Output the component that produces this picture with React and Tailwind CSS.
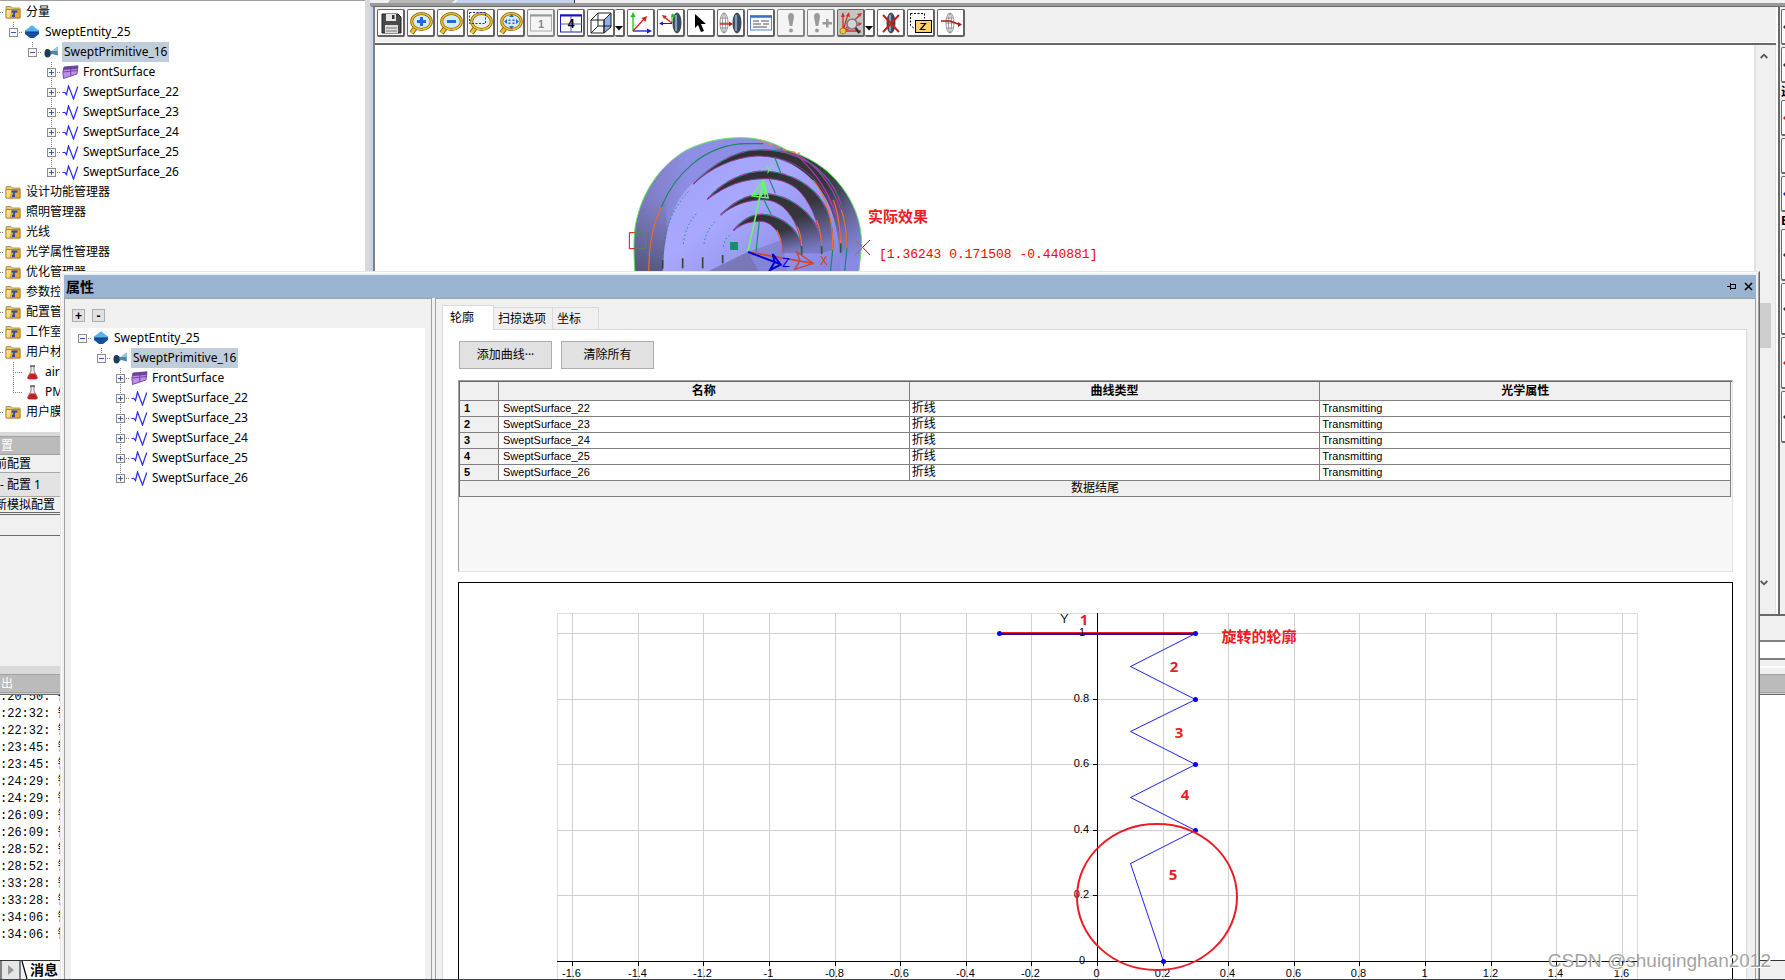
import { useState } from 'react';

const CJK = "font-['Noto_Sans','Noto_Sans_CJK_SC',sans-serif]";
const ARIAL = "font-['Liberation_Sans','Noto_Sans_CJK_SC',sans-serif]";

/* ---------- tree ---------- */

const FolderIcon = () => (
  <svg width="16" height="14" viewBox="0 0 16 14">
    <path d="M1 3V1.500h5L7.500 3H15v10H1z" fill="#e2c878" stroke="#a98b3c" strokeWidth=".8" />
    <path d="M1 4.500h14V13H1z" fill="#e9a92a" stroke="#a87a1c" strokeWidth=".8" />
    <path d="M1.500 5h5l-2 7.500h-3z" fill="#f8dc8c" />
    <path d="M6.500 6.500h6M9.500 6.500 8.500 11M7 11h3" stroke="#1c4fc0" strokeWidth="1.800" fill="none" />
  </svg>
);

const EntityIcon = () => (
  <svg width="14" height="14" viewBox="0 0 14 14">
    <path d="M7 .5 14 6.500 7 13 0 6.500z" fill="#1b58b0" />
    <path d="M0 5.500h14v3.500l-5 4H5L0 9z" fill="#174f9f" />
    <path d="M7 .5 14 5.500 13 7H1L0 5.500z" fill="#56b4ec" />
    <path d="M1 7h12" stroke="#123a78" strokeWidth="1" />
  </svg>
);

const PrimitiveIcon = () => (
  <svg width="15" height="14" viewBox="0 0 15 14">
    <path d="M2 4.500 8 6l5.500-4.500.5 9L8 9l-3.500 3z" fill="#4d87ab" />
    <path d="M8 6l5.500-4.500.3 4.500z" fill="#9cc6de" />
    <ellipse cx="3.500" cy="8.200" rx="3" ry="4.300" fill="#1f3d54" />
  </svg>
);

const FrontIcon = () => (
  <svg width="17" height="15" viewBox="0 0 17 15">
    <path d="M2 2 16 .8 15 9 1.500 13.500Q0 7 2 2z" fill="#c08cf0" stroke="#5d3b86" strokeWidth=".8" />
    <path d="M2 2 16 .8 15.600 4 1.200 5z" fill="#6a4793" />
    <path d="M9.500 1.500Q8 6 9 11M1 7l14.500-1.500" stroke="#5d3b86" strokeWidth=".8" fill="none" />
  </svg>
);

const PolylineIcon = () => (
  <svg width="17" height="15" viewBox="0 0 17 15">
    <path d="M.5 7.500h2.500l1.500 2L6.500 1l5 13L15.800 1.500" fill="none" stroke="#2a2af0" strokeWidth="1.200" />
  </svg>
);

const FlaskIcon = () => (
  <svg width="13" height="15" viewBox="0 0 13 15">
    <path d="M5 1v5L1.500 12.500Q1.500 14 3 14h7q1.500 0 1.500-1.500L8 6V1" fill="#eee" stroke="#777" strokeWidth=".9" />
    <path d="M4 8.500h5l2.300 4Q11.300 14 10 14H3Q1.700 14 1.700 12.500z" fill="#c81e1e" />
    <path d="M4 1h5" stroke="#444" strokeWidth="1.300" />
  </svg>
);

const ICONS = {
  folder: FolderIcon,
  entity: EntityIcon,
  primitive: PrimitiveIcon,
  front: FrontIcon,
  polyline: PolylineIcon,
  flask: FlaskIcon,
};

const sweptNodes = [
  { depth: 1, icon: 'entity', label: 'SweptEntity_25', box: '-', last: true },
  { depth: 2, icon: 'primitive', label: 'SweptPrimitive_16', box: '-', last: true, selected: true },
  { depth: 3, icon: 'front', label: 'FrontSurface', box: '+' },
  { depth: 3, icon: 'polyline', label: 'SweptSurface_22', box: '+' },
  { depth: 3, icon: 'polyline', label: 'SweptSurface_23', box: '+' },
  { depth: 3, icon: 'polyline', label: 'SweptSurface_24', box: '+' },
  { depth: 3, icon: 'polyline', label: 'SweptSurface_25', box: '+' },
  { depth: 3, icon: 'polyline', label: 'SweptSurface_26', box: '+', last: true },
];

const systemNodes = [
  { depth: 0, icon: 'folder', label: '分量' },
  ...sweptNodes,
  { depth: 0, icon: 'folder', label: '设计功能管理器' },
  { depth: 0, icon: 'folder', label: '照明管理器' },
  { depth: 0, icon: 'folder', label: '光线' },
  { depth: 0, icon: 'folder', label: '光学属性管理器' },
  { depth: 0, icon: 'folder', label: '优化管理器' },
  { depth: 0, icon: 'folder', label: '参数控制' },
  { depth: 0, icon: 'folder', label: '配置管理器' },
  { depth: 0, icon: 'folder', label: '工作室' },
  { depth: 0, icon: 'folder', label: '用户材料' },
  { depth: 1, icon: 'flask', label: 'air' },
  { depth: 1, icon: 'flask', label: 'PMMA', last: true },
  { depth: 0, icon: 'folder', label: '用户膜层' },
];

const Branch = ({ box, last, root }) => (
  <svg width="19" height="20" viewBox="0 0 19 20" className="shrink-0" shapeRendering="crispEdges">
    {!root && (
      <path d={last ? 'M9.500 0V10' : 'M9.500 0V20'} stroke="#808080" strokeDasharray="1 1" />
    )}
    <path d="M9 10.500H19" stroke="#808080" strokeDasharray="1 1" />
    {box && (
      <>
        <rect x="5.500" y="6.500" width="8" height="8" fill="#f8f8f8" stroke="#8c8c8c" />
        <path d={box === '+' ? 'M7 10.500h5M9.500 8v5' : 'M7 10.500h5'} stroke="#3b55a8" />
      </>
    )}
  </svg>
);

const TreeView = ({ nodes, indent }) => (
  <ul className={`text-xs text-black ${CJK}`}>
    {nodes.map((node, i) => {
      const Icon = ICONS[node.icon];
      return (
        <li
          key={i}
          className="flex h-5 items-center whitespace-nowrap"
          style={{ marginLeft: indent + (node.depth - 1) * 19 }}
        >
          <Branch box={node.box} last={node.last} root={i === 0 || node.depth === 0} />
          <span className="flex w-5 shrink-0 justify-center pr-[2px]">
            <Icon />
          </span>
          <span className={`h-5 px-[2px] leading-5 ${node.selected ? 'bg-[#bfcddb]' : ''}`}>
            {node.label}
          </span>
        </li>
      );
    })}
  </ul>
);

/* ---------- toolbar ---------- */

const Lens = ({ children, glass = '#d4ecf8' }) => (
  <>
    <path d="M7 16 2.500 22" stroke="#7d5c10" strokeWidth="5" />
    <path d="M7 16 2.500 22" stroke="#f2c22c" strokeWidth="3.200" />
    <ellipse cx="12.500" cy="10.500" rx="9.800" ry="8" fill={glass} stroke="#7d5c10" strokeWidth="3" />
    <ellipse cx="12.500" cy="10.500" rx="9.800" ry="8" fill="none" stroke="#f2c22c" strokeWidth="1.600" />
    {children}
  </>
);

const DarkLens = ({ cx = 18 }) => (
  <>
    <ellipse cx={cx} cy="12" rx="4" ry="10" fill="#41566e" stroke="#1e2b3a" strokeWidth=".8" />
    <path d={`M${cx - 1} 4v16`} stroke="#9fb4c8" strokeWidth="1.500" />
    <path d={`M${cx + 2} 5v14`} stroke="#2d4056" strokeWidth="1" />
  </>
);

const WireLens = ({ cx = 5 }) => (
  <g fill="none" stroke="#888" strokeWidth=".9">
    <ellipse cx={cx} cy="12" rx="4" ry="10" />
    <ellipse cx={cx} cy="12" rx="1.500" ry="10" />
    <path d={`M${cx - 3} 7h6M${cx - 4} 12h8M${cx - 3} 17h6`} />
  </g>
);

const toolIcons = {
  save: (
    <>
      <path d="M3 3h16l3 3v16H3z" fill="#4a4a4a" stroke="#222" />
      <path d="M7 3h10v7H7z" fill="#e8e8e8" />
      <path d="M13 4h2.500v4H13z" fill="#333" />
      <path d="M6 14h13v8H6z" fill="#ddd" />
      <path d="M7 17h11M7 20h11" stroke="#777" />
    </>
  ),
  zoomIn: (
    <Lens>
      <path d="M12.500 6v9M8 10.500h9" stroke="#2467d8" strokeWidth="3" />
    </Lens>
  ),
  zoomOut: (
    <Lens>
      <path d="M8 10.500h9" stroke="#2467d8" strokeWidth="3" />
    </Lens>
  ),
  zoomBox: (
    <Lens glass="#e6eef4">
      <path d="M.5 1.500h16v11H.5z" fill="none" stroke="#1b2fa8" strokeDasharray="2 1.500" />
    </Lens>
  ),
  zoomFit: (
    <Lens>
      <path
        d="M12.500 3l2.500 3h-5zM12.500 18l2.500-3h-5zM5 10.500l3-2.500v5zM20 10.500l-3-2.500v5zM9.500 8.500h2v1.500h-2zM13.500 8.500h2v1.500h-2zM9.500 11.500h2v1.500h-2zM13.500 11.500h2v1.500h-2z"
        fill="#2467d8"
      />
    </Lens>
  ),
  one: (
    <>
      <rect x="1.500" y="4" width="21" height="16" fill="#f4f4f4" stroke="#aaa" />
      <path d="M1 4.500h22" stroke="#999" strokeWidth="2" />
      <text x="12" y="17" textAnchor="middle" fontSize="11" fontWeight="700" fill="#888">1</text>
    </>
  ),
  four: (
    <>
      <rect x="1.500" y="4" width="21" height="17" fill="#fff" stroke="#1a1ab8" />
      <path d="M1 4.500h22" stroke="#1414c8" strokeWidth="2" />
      <path d="M1.500 13h21M12 5v16" stroke="#5a5ac8" />
      <text x="12" y="17" textAnchor="middle" fontSize="12" fontWeight="700" fill="#000">4</text>
    </>
  ),
  cube: (
    <>
      <path d="M15 9l7-7v14l-7 6z" fill="#8fb0e8" stroke="#222" />
      <path d="M2 9h13v13H2zM2 9l7-7h13M9 2v13h13M9 15l-7 7" fill="none" stroke="#222" />
    </>
  ),
  axes: (
    <>
      <path d="M4 20V4" stroke="#18c018" strokeWidth="1.300" />
      <path d="M4 1 1.500 6h5z" fill="#18c018" />
      <path d="M4 20h15" stroke="#1818e0" strokeWidth="1.300" />
      <path d="M23 20l-5-2.500v5z" fill="#1818e0" />
      <path d="M4 20 15 8" stroke="#d82020" strokeWidth="1.300" />
      <path d="M18 5l-1.500 6-4-4z" fill="#d82020" />
    </>
  ),
  axesLens: (
    <>
      <DarkLens cx={18} />
      <path d="M13 12V3" stroke="#18c018" />
      <path d="M14 2l-2 4h4z" fill="#18c018" />
      <path d="M13 12 5 6" stroke="#d82020" strokeWidth="1.300" />
      <path d="M3 4l5 1-3 3z" fill="#d82020" />
      <path d="M13 12.500H3" stroke="#1818e0" />
      <path d="M0 12.500l4-2v4z" fill="#1818e0" />
    </>
  ),
  pointer: <path d="M6 3l11 10h-5l3 7-3 1-3-7-3 3z" fill="#000" />,
  lensMove: (
    <>
      <WireLens cx={5} />
      <DarkLens cx={18} />
      <path d="M1 13h10" stroke="#c02020" strokeWidth="1.300" />
      <path d="M14 13l-4-2.500v5z" fill="#c02020" />
    </>
  ),
  card: (
    <>
      <rect x="1.500" y="5" width="21" height="14" fill="#f6f9fe" stroke="#5c86c8" />
      <path d="M1 5.500h22" stroke="#3f6fc0" strokeWidth="2.500" />
      <path d="M4 10h6M12 10h8M4 13h8M4 16h14M14 13h6" stroke="#555" />
    </>
  ),
  bang: (
    <g fill="#9b9b9b">
      <path d="M9 6q0-4 3-4t3 4l-1.700 9h-2.600z" />
      <circle cx="12" cy="19.500" r="2" />
    </g>
  ),
  bangPlus: (
    <g fill="#9b9b9b">
      <path d="M5 6q0-4 3-4t3 4l-1.700 9H6.700z" />
      <circle cx="8" cy="19.500" r="2" />
      <path d="M17 8h2.500v3H23v2.500h-3.500v3H17v-3h-3.500V11H17z" />
    </g>
  ),
  rays: (
    <>
      <path d="M4 20V4M4 20 9 3M4 20 22 3M4 20l18-7M4 20h18" stroke="#c83228" strokeWidth="1.300" />
      <path d="M4 1 2 6h4zM10 1 7 5l4 1zM23 2l-5 1 3 3zM23 12l-4-.5 1 3z" fill="#c83228" />
      <circle cx="4" cy="20" r="3" fill="#e8c840" stroke="#8a6a10" strokeWidth=".7" />
      <circle cx="13" cy="13" r="5" fill="#d4d4d4" stroke="#777" strokeWidth="1.500" />
      <path d="M16.500 17l4 5" stroke="#333" strokeWidth="2.500" />
    </>
  ),
  lensDelete: (
    <>
      <DarkLens cx={12} />
      <path d="M4 4l16 17M20 4 4 21" stroke="#c82018" strokeWidth="2" />
    </>
  ),
  zPlane: (
    <>
      <path d="M1.500 2.500h14v5M1.500 2.500v12l4 3" fill="none" stroke="#000" strokeDasharray="2 1.500" />
      <rect x="6.500" y="9.500" width="16" height="12" fill="#ffd070" stroke="#000" />
      <path d="M11.500 12.500h5l-5 6h5" fill="none" stroke="#000" strokeWidth="1.200" />
    </>
  ),
  lensRay: (
    <>
      <WireLens cx={11} />
      <path d="M2 10h9l8 3" fill="none" stroke="#b01818" strokeWidth="1.400" />
      <path d="M23 13.500l-4 2.500v-5z" fill="#b01818" />
    </>
  ),
};

const tools = [
  { id: 'save', title: '保存' },
  { id: 'zoomIn', title: '放大' },
  { id: 'zoomOut', title: '缩小' },
  { id: 'zoomBox', title: '窗口缩放' },
  { id: 'zoomFit', title: '全部显示' },
  { id: 'one', title: '单视图', disabled: true },
  { id: 'four', title: '四视图' },
  { id: 'cube', title: '视角', menu: true },
  { id: 'axes', title: '坐标轴' },
  { id: 'axesLens', title: '局部坐标' },
  { id: 'pointer', title: '选择' },
  { id: 'lensMove', title: '移动' },
  { id: 'card', title: '属性' },
  { id: 'bang', title: '追迹', disabled: true },
  { id: 'bangPlus', title: '追加追迹', disabled: true },
  { id: 'rays', title: '光线显示', menu: true, pressed: true },
  { id: 'lensDelete', title: '删除' },
  { id: 'zPlane', title: 'Z' },
  { id: 'lensRay', title: '光线' },
];

const ToolButton = ({ tool }) => {
  const face = tool.pressed ? 'bg-[#c4c4c4]' : tool.disabled ? 'bg-[#f4f4f4]' : 'bg-white';
  const edge = tool.disabled ? 'border-[#858585]' : 'border-[#636363]';
  return (
    <div className="flex">
      <button
        type="button"
        aria-label={tool.title}
        disabled={tool.disabled}
        className={`flex h-7 w-7 items-center justify-center rounded-[2px] border border-r-2 border-b-2 ${face} ${edge}`}
      >
        <svg width="24" height="24" viewBox="0 0 24 24" className={ARIAL}>
          {toolIcons[tool.id]}
        </svg>
      </button>
      {tool.menu && (
        <button
          type="button"
          aria-label={`${tool.title}菜单`}
          className="flex h-7 w-[10px] items-end justify-center rounded-[2px] border border-r-2 border-b-2 border-l-0 border-[#636363] bg-white pb-1"
        >
          <svg width="8" height="5" viewBox="0 0 8 5" className="shrink-0">
            <path d="M0 0h8L4 4.500z" fill="#000" />
          </svg>
        </button>
      )}
    </div>
  );
};

/* ---------- 3D view ---------- */

const rings = [
  {
    fill: 'url(#dark1)',
    outer: 'M280 192C330 140 400 92 470 90C540 86 620 108 672 165C720 215 742 290 741 385',
    inner: 'M722 395C724 310 700 250 650 185C600 130 540 108 470 108C400 112 330 145 280 192',
  },
  {
    fill: 'url(#dark2)',
    outer: 'M322 238C370 180 440 152 500 153C580 160 640 200 670 250C695 290 700 340 698 390',
    inner: 'M665 400C665 330 640 260 600 215C570 185 530 176 500 176C430 176 380 195 322 238',
  },
  {
    fill: 'url(#dark3)',
    outer: 'M362 285C400 245 440 222 500 221C570 228 620 270 645 310C660 340 665 370 665 400',
    inner: 'M605 400C605 340 585 295 550 262C530 245 510 240 490 239C440 240 400 255 362 285',
  },
  {
    fill: 'url(#dark4)',
    outer: 'M400 332C425 300 455 283 485 283C530 284 575 312 592 345C602 365 605 385 605 400',
    inner: 'M546 400C547 360 535 330 510 313C500 306 490 304 480 304C445 305 425 312 400 332',
  },
];

const Viewport3D = () => (
  <svg width="800" height="240" viewBox="375 45 800 240" className="block max-w-full shrink-0">
    <defs>
      <linearGradient id="body" x1="0" y1="0" x2="1" y2="0">
        <stop offset="0" stopColor="#7878b8" />
        <stop offset=".25" stopColor="#8e8ee6" />
        <stop offset=".6" stopColor="#8c8ce4" />
        <stop offset=".72" stopColor="#36363c" />
        <stop offset=".86" stopColor="#3e3e4a" />
        <stop offset="1" stopColor="#6c6ca4" />
      </linearGradient>
      <linearGradient id="shade" x1="0" y1="0" x2="0" y2="1">
        <stop offset="0" stopColor="#505070" stopOpacity="0" />
        <stop offset="1" stopColor="#464662" stopOpacity=".75" />
      </linearGradient>
      <linearGradient id="lower" x1="0" y1="0" x2="0" y2="1">
        <stop offset="0" stopColor="#8a8ae4" stopOpacity="0" />
        <stop offset="1" stopColor="#8a8ae4" />
      </linearGradient>
      <linearGradient id="face" x1="0" y1="0" x2="1" y2="1">
        <stop offset="0" stopColor="#a0a0f6" />
        <stop offset=".4" stopColor="#a8a8ff" />
        <stop offset="1" stopColor="#8080d8" />
      </linearGradient>
      {['1', '2', '3', '4'].map((n) => (
        <linearGradient key={n} id={`dark${n}`} x1=".3" y1="0" x2=".75" y2="1">
          <stop offset="0" stopColor="#303034" />
          <stop offset=".5" stopColor="#36363c" />
          <stop offset="1" stopColor="#7878c4" />
        </linearGradient>
      ))}
      <clipPath id="solid">
        <path d="M108 500C100 400 98 340 112 290C135 200 190 130 260 90C320 60 380 52 430 53C480 54 520 68 560 90C620 108 680 140 725 200C770 260 785 320 785 375L772 500Z" />
      </clipPath>
    </defs>
    <g transform="translate(600 120) scale(.33333)" fill="none" strokeWidth="3.500">
      <g clipPath="url(#solid)">
        <rect x="90" y="40" width="710" height="460" fill="url(#body)" />
        <rect x="560" y="220" width="240" height="200" fill="url(#lower)" />
        <rect x="560" y="419" width="240" height="90" fill="#8a8ae4" />
        <rect x="90" y="230" width="110" height="240" fill="url(#shade)" />
        <path
          d="M188 500C186 400 200 300 240 235C290 160 380 108 470 108C560 108 640 160 680 240C712 300 725 400 720 500Z"
          fill="url(#face)"
        />
        <path d="M445 395L230 500H500z" fill="#5e5e88" opacity=".55" />
        <path d="M445 395L546 360L570 500H500z" fill="#7a7ac8" opacity=".6" />
      </g>
      {rings.map((ring, i) => (
        <g key={i}>
          <path d={`${ring.outer} L${ring.inner.slice(1)}`} fill={ring.fill} />
          <path d={ring.outer} stroke="#159068" />
          <path d={ring.outer} stroke="#a43aa8" strokeDasharray="26 14" />
          <path d={ring.inner} stroke="#8a3a90" strokeWidth="3" />
        </g>
      ))}
      <path d="M146 500C145 400 150 330 184 262" stroke="#ec6c28" />
      <path d="M184 262C220 170 310 72 440 71H490" stroke="#16885c" />
      <path d="M552 90C640 110 700 200 722 270" stroke="#b03cb4" />
      <path d="M585 100C640 150 700 220 722 340" stroke="#b03cb4" />
      <path
        d="M640 180C680 230 700 300 698 390M700 240C716 280 722 330 722 395M724 270C736 305 741 340 741 385M592 320C602 340 606 370 605 400M650 300C662 330 665 370 665 400M530 330C542 350 546 370 546 400"
        stroke="#f0722c"
      />
      <path d="M698 390L690 470M741 385L732 470" stroke="#108a62" />
      <path d="M722 370V398M665 378V402M605 378V405" stroke="#2f5a40" strokeWidth="5" />
      <path d="M188 446V420M248 445V415M308 445V412M368 430V405" stroke="#3a4430" strokeWidth="5" />
      <path d="M188 415C190 330 215 270 265 215M250 372C255 330 268 305 290 280M312 372C316 345 325 325 350 300M370 380C374 360 380 350 392 345" stroke="#188a70" strokeWidth="3" strokeDasharray="4 8" />
      <path
        d="M108 500C100 400 98 340 112 290C135 200 190 130 260 90C320 60 380 52 430 53C480 54 520 68 560 90C620 108 680 140 725 200C770 260 785 320 785 375L772 500"
        stroke="#62e862"
        strokeWidth="3"
      />
      <path d="M480 62L560 92L600 100" stroke="#f08048" strokeDasharray="16 8" />
      <path d="M524 112L542 158M508 178L526 220M492 240L514 284M478 304L468 395" stroke="#0f9468" />
      <rect x="390" y="366" width="24" height="24" fill="#0f9468" />
      <g stroke="#66f866" strokeWidth="5">
        <path d="M444 394L490 182" />
        <path d="M490 180L456 228L505 234L490 180L484 228M490 180L496 234M462 224L500 220" strokeWidth="4" />
        <path d="M498 136L507 150L518 136M507 150L503 160" strokeWidth="3" />
      </g>
      <g stroke="#d04428" strokeWidth="5">
        <path d="M444 396L640 430" />
        <path d="M640 430L590 396L600 422L584 448L640 430" strokeWidth="4" />
      </g>
      <g stroke="#0000d8" strokeWidth="6">
        <path d="M444 396L540 432" />
        <path d="M542 434L518 402L524 426L510 450z" />
      </g>
      <path d="M137 338V386H104M104 338H137" stroke="#5a8a50" strokeWidth="3" />
      <path d="M104 338H88V386H104" stroke="#f00000" strokeWidth="3" />
      <path d="M810 360L788 382L810 405" stroke="#f00000" strokeWidth="3" />
      <path d="M764 358L788 382L764 406" stroke="#7a8a30" strokeWidth="3" />
    </g>
    <g className="font-['Liberation_Mono',monospace]" fontSize="13">
      <text x="782" y="267" fill="#0000d8">Z</text>
      <text x="820" y="265" fill="#d04428">X</text>
      <text x="879" y="258" fill="#ff0000">[1.36243 0.171508 -0.440881]</text>
    </g>
    <text x="868" y="222" fill="#ed1c24" fontSize="15" fontWeight="700" className={CJK}>
      实际效果
    </text>
  </svg>
);

/* ---------- profile chart ---------- */

const PX = 328; // pixels per unit on both axes
const ORIGIN = { x: 1096, y: 961 };
const toX = (v) => Math.round(ORIGIN.x + v * PX) + 0.5;
const toY = (v) => Math.round(ORIGIN.y - v * PX) + 0.5;

const xTicks = Array.from({ length: 17 }, (_, i) => (i - 8) / 5);
const yTicks = [0, 0.2, 0.4, 0.6, 0.8, 1];

const profile = [
  [-0.3, 1],
  [0.3, 1],
  [0.1, 0.9],
  [0.3, 0.8],
  [0.1, 0.7],
  [0.3, 0.6],
  [0.1, 0.5],
  [0.3, 0.4],
  [0.1, 0.3],
  [0.2, 0],
];
const endpoints = [profile[0], profile[1], profile[3], profile[5], profile[7], profile[9]];

const notes = [
  { text: '1', x: 1083, y: 625 },
  { text: '2', x: 1173, y: 672 },
  { text: '3', x: 1178, y: 738 },
  { text: '4', x: 1184, y: 800 },
  { text: '5', x: 1172, y: 880 },
];

const ProfileChart = () => (
  <svg
    width="1080"
    height="396"
    viewBox="555 583 1080 396"
    className={`block shrink-0 overflow-visible ${ARIAL}`}
    fontSize="11"
  >
    <g stroke="#d0d0d0" shapeRendering="crispEdges">
      <path d="M556.500 980V613.500H1636.500V980" fill="none" stroke="#dcdcdc" />
      {xTicks.map((t) => (
        <path key={t} d={`M${toX(t)} 613V980`} />
      ))}
      {yTicks.map((t) => (
        <path key={t} d={`M556 ${toY(t)}H1636`} />
      ))}
    </g>
    <g stroke="#000" shapeRendering="crispEdges">
      <path d="M556 961.500H1637M1096.500 613V965" />
      {xTicks.map((t) => (
        <path key={t} d={`M${toX(t)} 961V966`} />
      ))}
      {yTicks.map((t) => (
        <path key={t} d={`M1092 ${toY(t)}H1097`} />
      ))}
    </g>
    {xTicks.map((t) => (
      <text key={t} x={toX(t) - 1} y="977" textAnchor="middle">{t}</text>
    ))}
    <path d={`M${toX(-0.3)} 633.500H${toX(0.3)}`} stroke="#ed1c24" strokeWidth="3" />
    <path d={`M${toX(-0.3)} 634H${toX(0.3)}`} stroke="#2a0a9c" strokeWidth="2" />
    {yTicks.map((t) => (
      <text key={t} x={t % 1 ? 1088 : 1084} y={toY(t) + 2} textAnchor="end">{t}</text>
    ))}
    <text x="1059" y="623" fontSize="13" fill="#222">Y</text>
    <polyline
      points={profile.slice(1).map(([x, y]) => `${toX(x)},${toY(y)}`).join(' ')}
      fill="none"
      stroke="#2020ff"
      strokeWidth="1"
    />
    {endpoints.map(([x, y]) => (
      <circle key={`${x}${y}`} cx={toX(x)} cy={toY(y)} r="2.500" fill="#0000ff" />
    ))}
    <ellipse cx="1156" cy="897" rx="80" ry="73" fill="none" stroke="#ed1c24" strokeWidth="2" />
    <g fill="#ed1c24" fontWeight="700" fontSize="15" className={CJK} textAnchor="middle">
      {notes.map((n) => (
        <text key={n.text} x={n.x} y={n.y}>{n.text}</text>
      ))}
      <text x="1258" y="642">旋转的轮廓</text>
    </g>
  </svg>
);

/* ---------- properties window ---------- */

const curves = ['SweptSurface_22', 'SweptSurface_23', 'SweptSurface_24', 'SweptSurface_25', 'SweptSurface_26'];
const tabs = [
  { label: '轮廓', width: 'w-[52px]' },
  { label: '扫掠选项', width: 'w-[59px]' },
  { label: '坐标', width: 'w-[46px]' },
];

const CurveTable = () => (
  <div className="mt-[11px] h-48 shrink-0 border border-[#a0a0a0] border-r-[#e3e3e3] border-b-[#e3e3e3] bg-[#f7f7f7]">
    <div className="border-t border-l border-[#696969] pr-px">
      <table className={`w-full table-fixed border-separate border-spacing-0 text-[11px] leading-[15px] text-black ${ARIAL}`}>
        <colgroup>
          <col className="w-[39px]" />
          <col />
          <col />
          <col />
        </colgroup>
        <thead>
          <tr className="h-[19px] bg-[#f0f0f0] text-xs">
            <th className="border-r border-b border-[#808080]" />
            {['名称', '曲线类型', '光学属性'].map((h) => (
              <th key={h} scope="col" className="border-r border-b border-[#808080] p-0 leading-[18px] font-bold">{h}</th>
            ))}
          </tr>
        </thead>
        <tbody>
          {curves.map((name, i) => (
            <tr key={name} className="h-4 bg-white">
              <th scope="row" className="border-r border-b border-[#808080] bg-[#f0f0f0] py-0 pr-0 pl-1 text-left font-bold">{i + 1}</th>
              <td className="border-r border-b border-[#808080] py-0 pr-0 pl-1">{name}</td>
              <td className="border-r border-b border-[#808080] py-0 pr-0 pl-[2px] text-xs leading-[15px]">折线</td>
              <td className="border-r border-b border-[#808080] py-0 pr-0 pl-[2px]">Transmitting</td>
            </tr>
          ))}
          <tr className="h-4 bg-[#f0f0f0]">
            <td colSpan="4" className="border-r border-b border-[#808080] p-0 text-center text-xs leading-[15px]">数据结尾</td>
          </tr>
        </tbody>
      </table>
    </div>
  </div>
);

const PropertiesWindow = () => {
  const [tab, setTab] = useState('轮廓');

  return (
    <section className="absolute top-[271px] right-[25px] bottom-px left-[60px] flex border-t border-r border-l border-[#e6e6e6] border-r-[#696969] bg-[#f0f0f0]">
      <div className="flex min-w-0 flex-1 flex-col border-t border-r border-l border-white border-r-[#a0a0a0] px-[2px] pt-[2px]">
        <header className={`flex h-[23px] shrink-0 items-center justify-between bg-[#99b3d1] pr-[3px] pl-[2px] text-black ${CJK}`}>
          <h2 className="text-sm leading-5 font-bold">属性</h2>
          <div className="flex gap-2">
            <button type="button" aria-label="固定">
              <svg width="9" height="9" viewBox="0 0 9 9" shapeRendering="crispEdges">
                <path d="M0 4.500h3M3.500 1v7M3 2.500h5.500v4M3 6.500h5" fill="none" stroke="#000" />
              </svg>
            </button>
            <button type="button" aria-label="关闭">
              <svg width="9" height="9" viewBox="0 0 9 9">
                <path d="M1 1l7 7M8 1 1 8" stroke="#000" strokeWidth="1.600" />
              </svg>
            </button>
          </div>
        </header>

        <div className="flex min-h-0 flex-1 gap-[3px]">
          <div className="flex w-[368px] shrink-0 flex-col border-t border-r border-l border-[#a0a0a0] px-[6px] pt-[10px]">
            <div className="flex gap-[7px] pl-px">
              {['+', '-'].map((s) => (
                <button
                  key={s}
                  type="button"
                  className={`flex h-[13px] w-[13px] items-center justify-center border border-[#adadad] bg-[#e1e1e1] text-xs leading-3 font-bold text-black ${ARIAL}`}
                >
                  {s}
                </button>
              ))}
            </div>
            <div className="mt-[6px] flex-1 bg-white">
              <TreeView nodes={sweptNodes} indent={2} />
            </div>
          </div>

          <div className="flex min-w-0 flex-1 flex-col border-t border-r border-l border-[#a0a0a0] pt-[6px] pr-2 pl-[6px]">
            <div role="tablist" className={`flex h-6 shrink-0 items-end text-xs text-black ${CJK}`}>
              {tabs.map((t) => (
                <button
                  key={t.label}
                  type="button"
                  role="tab"
                  aria-selected={tab === t.label}
                  onClick={() => setTab(t.label)}
                  className={
                    tab === t.label
                      ? `relative -mb-px h-[25px] border-t border-r border-l border-[#d9d9d9] bg-white pb-px pl-[7px] text-left whitespace-nowrap ${t.width}`
                      : `h-[22px] border-t border-r border-[#d9d9d9] bg-[#f0f0f0] pl-1 text-left whitespace-nowrap ${t.width}`
                  }
                >
                  {t.label}
                </button>
              ))}
            </div>
            <div role="tabpanel" className="flex min-h-0 flex-1 flex-col border-t border-r border-l border-[#d9d9d9] bg-white pt-[11px] pr-[13px] pl-[15px]">
              <div className={`flex shrink-0 gap-[9px] pl-px text-xs text-black ${CJK}`}>
                <button type="button" className="h-7 w-[93px] border border-[#adadad] bg-[#e1e1e1]">添加曲线···</button>
                <button type="button" className="h-7 w-[93px] border border-[#adadad] bg-[#e1e1e1]">清除所有</button>
              </div>
              <CurveTable />
              <div className="mt-[10px] flex min-h-0 flex-1 justify-center overflow-hidden border-t border-r border-l border-black">
                <ProfileChart />
              </div>
            </div>
          </div>
        </div>
      </div>
    </section>
  );
};

/* ---------- main frame ---------- */

const Chevron = ({ down }) => (
  <svg width="8" height="6" viewBox="0 0 8 6">
    <path d={down ? 'M.7 1 4 4.300 7.300 1' : 'M.7 5 4 1.700 7.300 5'} fill="none" stroke="#555" strokeWidth="1.800" />
  </svg>
);

const StripButton = ({ tall, mark = '#333' }) => (
  <button
    type="button"
    aria-label="工具"
    className={`w-9 shrink-0 rounded-[2px] border border-b-2 border-[#696969] bg-[#fafafa] ${tall ? 'h-[52px]' : 'h-9'}`}
  >
    <svg width="3" height="8" viewBox="0 0 3 8">
      <path d="M3 2 1 4l2 2z" fill={mark} />
    </svg>
  </button>
);

const SideStrip = () => (
  <div className={`flex w-[5px] shrink-0 flex-col gap-[2px] overflow-hidden pt-[2px] pl-px text-xs font-bold text-black ${CJK}`}>
    <StripButton />
    <StripButton />
    <span className="h-[13px] leading-[13px]">迹</span>
    <StripButton mark="#c82018" />
    <StripButton mark="#fafafa" />
    <StripButton mark="#2020c8" />
    <span className="h-[13px] leading-[13px]">E</span>
    <StripButton tall />
    <StripButton tall />
    <StripButton tall mark="#c82018" />
    <StripButton tall />
  </div>
);

const ConfigPanel = () => (
  <div className={`h-[230px] shrink-0 overflow-hidden bg-[#f0f0f0] text-xs whitespace-nowrap text-black ${CJK}`}>
    <div className="h-[19px] border-y border-[#a0a0a0] bg-[#bbbbbb] pl-px leading-[17px] text-white">置</div>
    <div className="-ml-[5px]">
      <div className="h-[18px] border-b border-[#a8a8a8] leading-[18px]">前配置</div>
      <div className="h-6 border-b border-[#a8a8a8] bg-[#e3e3e3] pl-[5px] leading-6">- 配置 1</div>
      <div className="h-4 border-b border-[#696969] leading-4">新模拟配置</div>
    </div>
    <div className="mt-px h-[22px] border-t border-b border-[#696969]" />
  </div>
);

const logTimes = [
  '20:50', '22:32', '22:32', '23:45', '23:45', '24:29', '24:29', '26:09',
  '26:09', '28:52', '28:52', '33:28', '33:28', '34:06', '34:06',
];

const OutputPanel = () => (
  <div className="flex h-[305px] shrink-0 flex-col bg-white">
    <div className={`h-[19px] shrink-0 border-y border-[#a0a0a0] bg-[#bbbbbb] pl-px text-xs leading-[17px] text-white ${CJK}`}>出</div>
    <div className="h-[2px] shrink-0 border-b border-[#696969] bg-[#d0d0d0]" />
    <ol className="min-h-0 flex-1 overflow-hidden font-['Liberation_Mono','Noto_Sans_CJK_SC',monospace] text-xs text-black">
      {logTimes.map((t, i) => (
        <li key={i} className="h-[17px] leading-[17px] whitespace-pre first:-mt-[6px]">{`:${t}: 错误`}</li>
      ))}
    </ol>
    <div className={`flex h-[19px] shrink-0 items-stretch border-t border-[#333] bg-[#f0f0f0] text-sm font-bold text-black ${CJK}`}>
      <button type="button" aria-label="下一页" className="flex w-[21px] items-center justify-center border-r-2 border-l-2 border-[#808080] bg-[#e6e6e6]">
        <svg width="6" height="10" viewBox="0 0 6 10">
          <path d="M0 0l6 5-6 5z" fill="#999" />
        </svg>
      </button>
      <button type="button" className="flex items-center bg-white leading-4">
        <svg width="9" height="18" viewBox="0 0 9 18">
          <path d="M0 0h1l5 18H0z" fill="#f0f0f0" />
          <path d="M1 0l5 18" stroke="#000" strokeWidth="1.200" />
        </svg>
        消息
      </button>
    </div>
  </div>
);

const App = () => (
  <main className="relative flex h-screen w-full flex-col overflow-hidden bg-[#f0f0f0]">
    <div className="flex min-h-0 flex-1">
      <aside className="flex w-[370px] shrink-0 flex-col border-r-[5px] border-[#d9d9d9]">
        <div className="min-h-0 flex-1 overflow-hidden border-t border-[#a0a0a0] bg-white pt-px">
          <TreeView nodes={systemNodes} indent={4} />
        </div>
        <div className="h-1 shrink-0 bg-[#d9d9d9]" />
        <ConfigPanel />
      </aside>

      <div className="flex min-w-0 flex-1 flex-col">
        <svg height="3" width="260" viewBox="0 0 260 3" className="block shrink-0">
          <path d="M20 0h65l-3 3H18z" fill="#b8b8b8" />
          <path d="M88 0h116v3H85z" fill="#c5d3f0" />
          <path d="M204.500 0v3" stroke="#333" />
        </svg>
        <div className="h-[3px] shrink-0 bg-[#9a9a9a]" />
        <div className="flex min-h-0 flex-1 border-t border-l-[3px] border-[#696969] border-l-[#c5d3f0]">
          <div className="flex min-w-0 flex-1 flex-col border-l-2 border-[#808080]">
            <div role="toolbar" className="flex h-9 shrink-0 gap-[2px] border-b border-white bg-[#f0f0f0] pt-[2px] pl-[2px]">
              {tools.map((tool) => (
                <ToolButton key={tool.id} tool={tool} />
              ))}
            </div>
            <div className="flex min-h-0 flex-1 border-t-2 border-[#696969]">
              <div className="min-w-0 flex-1 overflow-hidden bg-white">
                <Viewport3D />
              </div>
              <div className="flex w-[22px] shrink-0 flex-col items-center border-r border-l-2 border-[#e3e3e3] bg-[#f0f0f0] pt-2 pr-1 pb-[28px]">
                <Chevron />
                <div className="mt-[244px] h-[45px] w-[15px] bg-[#cdcdcd]" />
                <div className="flex-1" />
                <Chevron down />
              </div>
            </div>
          </div>
          <div className="w-1 shrink-0 border-r-2 border-l-2 border-[#696969] border-l-white" />
          <SideStrip />
        </div>
        <div className="flex h-[52px] shrink-0 flex-col border-t-2 border-[#696969] pt-6">
          <div className="h-5 border-t-2 border-b-2 border-[#808080] bg-white" />
        </div>
      </div>
    </div>
    <div className="flex h-2 shrink-0">
      <div className="w-[370px] bg-[#d9d9d9]" />
      <div className="flex-1 border-y-2 border-white border-b-[#f0f0f0]" />
    </div>
    <OutputPanel />
    <div className="h-px shrink-0 bg-[#3f4548]" />

    <PropertiesWindow />

    <p className={`absolute right-[14px] bottom-[7px] text-[19px] leading-6 text-[#8a8a8a]/80 [text-shadow:1px_1px_0_#ffffff] ${ARIAL}`}>
      CSDN @shuiqinghan2012
    </p>
  </main>
);

export default App;
